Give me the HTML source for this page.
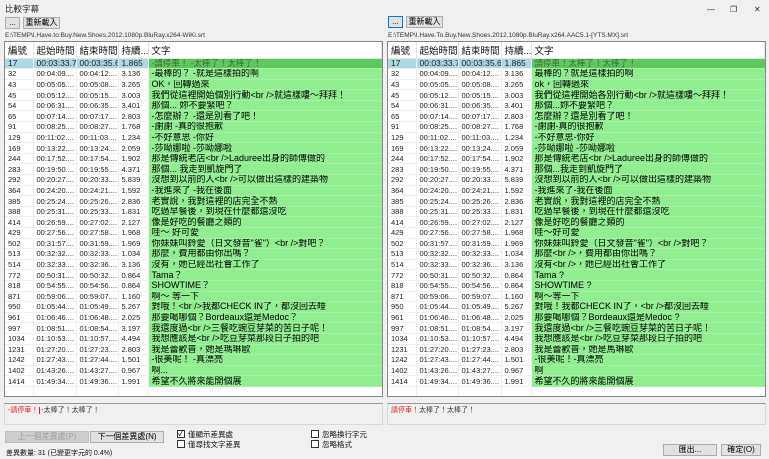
<!DOCTYPE html>
<html><head><meta charset="utf-8"><style>
*{margin:0;padding:0;box-sizing:border-box}
body{width:769px;height:459px;background:#f0f0f0;font-family:"Liberation Sans","Noto Sans CJK TC",sans-serif;position:relative;overflow:hidden;color:#000}
.abs{position:absolute}
.title{left:5px;top:3px;font-size:8.5px;color:#222}
.win{top:5px;font-size:8px;color:#333}
.btn{position:absolute;background:#e1e1e1;border:1px solid #adadad;font-size:8px;text-align:center;line-height:10px;color:#000}
.path{font-size:6.5px;color:#333}
.list{position:absolute;top:41px;height:356px;background:#fff;border:1px solid #828790;overflow:hidden}
table{border-collapse:collapse;table-layout:fixed;width:100%}
th{height:16px;font-weight:normal;font-size:9.5px;text-align:left;padding-left:3px;border-right:1px solid #e5e5e5;border-bottom:1px solid #e5e5e5;white-space:nowrap;overflow:hidden;color:#111}
td{height:10.6px;font-size:7.5px;padding-left:3px;white-space:nowrap;overflow:hidden;border-right:1px solid #f0f0f0;border-bottom:1px solid #f0f0f0;line-height:9px;color:#222}
td.t{background:#90ee90;font-size:9px;border-right:none;border-bottom:1px solid #a8f0a8;color:#000}
tr.s td{background:#add8e6;font-size:8.5px}
tr.s td.t{background:#5ec85e;color:#3a6a3a}
.prev{position:absolute;top:403px;height:22px;border:1px solid #d8d8d8;border-top:1px solid #999;font-size:7px;padding:1px 3px;color:#333}
.red{color:#e02020}
.cb{position:absolute;width:8px;height:8px;border:1px solid #333;background:#fff}
.lbl{position:absolute;font-size:7.5px;color:#111}
</style></head><body>
<div class="abs title">比較字幕</div>
<div class="abs win" style="left:707px">&#8212;</div>
<div class="abs win" style="left:730px">&#10064;</div>
<div class="abs win" style="left:754px">&#10005;</div>

<div class="btn" style="left:5px;top:17px;width:15px;height:12px">...</div>
<div class="btn" style="left:23px;top:17px;width:37px;height:12px">重新載入</div>
<div class="abs path" style="left:5px;top:32px">E:\TEMP\I.Have.to.Buy.New.Shoes.2012.1080p.BluRay.x264-WiKi.srt</div>
<div class="btn" style="left:388px;top:16px;width:15px;height:12px;border-color:#0078d7">...</div>
<div class="btn" style="left:406px;top:16px;width:37px;height:12px">重新載入</div>
<div class="abs path" style="left:388px;top:32px">E:\TEMP\I.Have.To.Buy.New.Shoes.2012.1080p.BluRay.x264.AAC5.1-[YTS.MX].srt</div>

<div class="list" style="left:4px;width:379px">
<table><colgroup><col style="width:28px"><col style="width:43px"><col style="width:42px"><col style="width:30px"><col></colgroup>
<tr><th>編號</th><th>起始時間</th><th>結束時間</th><th>持續...</th><th>文字</th></tr>
<tr class="s"><td>17</td><td>00:03:33.74</td><td>00:03:35.61</td><td>1.865</td><td class="t">-請停車！ -太棒了！太棒了！</td></tr>
<tr><td>32</td><td>00:04:09....</td><td>00:04:12....</td><td>3.136</td><td class="t">-最棒的？ -就是這樣拍的啊</td></tr>
<tr><td>43</td><td>00:05:05....</td><td>00:05:08....</td><td>3.265</td><td class="t">OK，回轉過來</td></tr>
<tr><td>45</td><td>00:05:12....</td><td>00:05:15....</td><td>3.003</td><td class="t">我們從這裡開始個別行動&lt;br /&gt;就這樣嘍～拜拜！</td></tr>
<tr><td>54</td><td>00:06:31....</td><td>00:06:35....</td><td>3.401</td><td class="t">那個... 妳不要緊吧？</td></tr>
<tr><td>65</td><td>00:07:14....</td><td>00:07:17....</td><td>2.803</td><td class="t">-怎麼辦？ -還是別看了吧！</td></tr>
<tr><td>91</td><td>00:08:25....</td><td>00:08:27....</td><td>1.768</td><td class="t">-謝謝 -真的很抱歉</td></tr>
<tr><td>129</td><td>00:11:02....</td><td>00:11:03....</td><td>1.234</td><td class="t">-不好意思 -你好</td></tr>
<tr><td>169</td><td>00:13:22....</td><td>00:13:24....</td><td>2.059</td><td class="t">-莎呦娜啦 -莎呦娜啦</td></tr>
<tr><td>244</td><td>00:17:52....</td><td>00:17:54....</td><td>1.902</td><td class="t">那是傳統老店&lt;br /&gt;Laduree出身的師傅做的</td></tr>
<tr><td>283</td><td>00:19:50....</td><td>00:19:55....</td><td>4.371</td><td class="t">那個... 我走到凱旋門了</td></tr>
<tr><td>292</td><td>00:20:27....</td><td>00:20:33....</td><td>5.839</td><td class="t">沒想到以前的人&lt;br /&gt;可以做出這樣的建築物</td></tr>
<tr><td>364</td><td>00:24:20....</td><td>00:24:21....</td><td>1.592</td><td class="t">-我進來了 -我在後面</td></tr>
<tr><td>385</td><td>00:25:24....</td><td>00:25:26....</td><td>2.836</td><td class="t">老實說，我對這裡的店完全不熟</td></tr>
<tr><td>388</td><td>00:25:31....</td><td>00:25:33....</td><td>1.831</td><td class="t">吃過早餐後，到現在什麼都還沒吃</td></tr>
<tr><td>414</td><td>00:26:59....</td><td>00:27:02....</td><td>2.127</td><td class="t">像是好吃的餐廳之類的</td></tr>
<tr><td>429</td><td>00:27:56....</td><td>00:27:58....</td><td>1.968</td><td class="t">哇～ 好可愛</td></tr>
<tr><td>502</td><td>00:31:57....</td><td>00:31:59....</td><td>1.969</td><td class="t">你妹妹叫鈴愛（日文發音"雀"）&lt;br /&gt;對吧？</td></tr>
<tr><td>513</td><td>00:32:32....</td><td>00:32:33....</td><td>1.034</td><td class="t">那麼，費用都由你出嗎？</td></tr>
<tr><td>514</td><td>00:32:33....</td><td>00:32:36....</td><td>3.136</td><td class="t">沒有，她已經出社會工作了</td></tr>
<tr><td>772</td><td>00:50:31....</td><td>00:50:32....</td><td>0.864</td><td class="t">Tama？</td></tr>
<tr><td>818</td><td>00:54:55....</td><td>00:54:56....</td><td>0.864</td><td class="t">SHOWTIME？</td></tr>
<tr><td>871</td><td>00:59:06....</td><td>00:59:07....</td><td>1.160</td><td class="t">啊～ 等一下</td></tr>
<tr><td>950</td><td>01:05:44....</td><td>01:05:49....</td><td>5.267</td><td class="t">對哦！&lt;br /&gt;我都CHECK IN了，都沒回去睡</td></tr>
<tr><td>961</td><td>01:06:46....</td><td>01:06:48....</td><td>2.025</td><td class="t">那要喝哪個？Bordeaux還是Medoc？</td></tr>
<tr><td>997</td><td>01:08:51....</td><td>01:08:54....</td><td>3.197</td><td class="t">我還度過&lt;br /&gt;三餐吃豌豆芽菜的苦日子呢！</td></tr>
<tr><td>1034</td><td>01:10:53....</td><td>01:10:57....</td><td>4.494</td><td class="t">我想應該是&lt;br /&gt;吃豆芽菜那段日子拍的吧</td></tr>
<tr><td>1231</td><td>01:27:20....</td><td>01:27:23....</td><td>2.803</td><td class="t">我是蕾歡普，她是瑪琳歐</td></tr>
<tr><td>1242</td><td>01:27:43....</td><td>01:27:44....</td><td>1.501</td><td class="t">-很美呢！ -真漂亮</td></tr>
<tr><td>1402</td><td>01:43:26....</td><td>01:43:27....</td><td>0.967</td><td class="t">啊...</td></tr>
<tr><td>1414</td><td>01:49:34....</td><td>01:49:36....</td><td>1.991</td><td class="t">希望不久將來能開個展</td></tr>
<tr><td></td><td></td><td></td><td></td><td style="border-right:none"></td></tr>
</table></div>

<div class="list" style="left:387px;width:379px">
<table><colgroup><col style="width:28px"><col style="width:42px"><col style="width:43px"><col style="width:30px"><col></colgroup>
<tr><th>編號</th><th>起始時間</th><th>結束時間</th><th>持續...</th><th>文字</th></tr>
<tr class="s"><td>17</td><td>00:03:33.74</td><td>00:03:35.61</td><td>1.865</td><td class="t">請停車！太棒了！太棒了！</td></tr>
<tr><td>32</td><td>00:04:09....</td><td>00:04:12....</td><td>3.136</td><td class="t">最棒的？就是這樣拍的啊</td></tr>
<tr><td>43</td><td>00:05:05....</td><td>00:05:08....</td><td>3.265</td><td class="t">ok，回轉過來</td></tr>
<tr><td>45</td><td>00:05:12....</td><td>00:05:15....</td><td>3.003</td><td class="t">我們從這裡開始各別行動&lt;br /&gt;就這樣嘍～拜拜！</td></tr>
<tr><td>54</td><td>00:06:31....</td><td>00:06:35....</td><td>3.401</td><td class="t">那個...妳不要緊吧？</td></tr>
<tr><td>65</td><td>00:07:14....</td><td>00:07:17....</td><td>2.803</td><td class="t">怎麼辦？還是別看了吧！</td></tr>
<tr><td>91</td><td>00:08:25....</td><td>00:08:27....</td><td>1.768</td><td class="t">-謝謝-真的很抱歉</td></tr>
<tr><td>129</td><td>00:11:02....</td><td>00:11:03....</td><td>1.234</td><td class="t">-不好意思-你好</td></tr>
<tr><td>169</td><td>00:13:22....</td><td>00:13:24....</td><td>2.059</td><td class="t">-莎呦娜啦 -莎呦娜啦</td></tr>
<tr><td>244</td><td>00:17:52....</td><td>00:17:54....</td><td>1.902</td><td class="t">那是傳統老店&lt;br /&gt;Laduree出身的師傅做的</td></tr>
<tr><td>283</td><td>00:19:50....</td><td>00:19:55....</td><td>4.371</td><td class="t">那個...我走到凱旋門了</td></tr>
<tr><td>292</td><td>00:20:27....</td><td>00:20:33....</td><td>5.839</td><td class="t">沒想到以前的人&lt;br /&gt;可以做出這樣的建築物</td></tr>
<tr><td>364</td><td>00:24:20....</td><td>00:24:21....</td><td>1.592</td><td class="t">-我進來了-我在後面</td></tr>
<tr><td>385</td><td>00:25:24....</td><td>00:25:26....</td><td>2.836</td><td class="t">老實說，我對這裡的店完全不熟</td></tr>
<tr><td>388</td><td>00:25:31....</td><td>00:25:33....</td><td>1.831</td><td class="t">吃過早餐後，到現在什麼都還沒吃</td></tr>
<tr><td>414</td><td>00:26:59....</td><td>00:27:02....</td><td>2.127</td><td class="t">像是好吃的餐廳之類的</td></tr>
<tr><td>429</td><td>00:27:56....</td><td>00:27:58....</td><td>1.968</td><td class="t">哇～好可愛</td></tr>
<tr><td>502</td><td>00:31:57....</td><td>00:31:59....</td><td>1.969</td><td class="t">你妹妹叫鈴愛（日文發音"雀"）&lt;br /&gt;對吧？</td></tr>
<tr><td>513</td><td>00:32:32....</td><td>00:32:33....</td><td>1.034</td><td class="t">那麼&lt;br /&gt;，費用都由你出嗎？</td></tr>
<tr><td>514</td><td>00:32:33....</td><td>00:32:36....</td><td>3.136</td><td class="t">沒有&lt;br /&gt;，她已經出社會工作了</td></tr>
<tr><td>772</td><td>00:50:31....</td><td>00:50:32....</td><td>0.864</td><td class="t">Tama ?</td></tr>
<tr><td>818</td><td>00:54:55....</td><td>00:54:56....</td><td>0.864</td><td class="t">SHOWTIME ?</td></tr>
<tr><td>871</td><td>00:59:06....</td><td>00:59:07....</td><td>1.160</td><td class="t">啊～等一下</td></tr>
<tr><td>950</td><td>01:05:44....</td><td>01:05:49....</td><td>5.267</td><td class="t">對哦！我都CHECK IN了，&lt;br /&gt;都沒回去睡</td></tr>
<tr><td>961</td><td>01:06:46....</td><td>01:06:48....</td><td>2.025</td><td class="t">那要喝哪個？Bordeaux還是Medoc ?</td></tr>
<tr><td>997</td><td>01:08:51....</td><td>01:08:54....</td><td>3.197</td><td class="t">我還度過&lt;br /&gt;三餐吃豌豆芽菜的苦日子呢！</td></tr>
<tr><td>1034</td><td>01:10:53....</td><td>01:10:57....</td><td>4.494</td><td class="t">我想應該是&lt;br /&gt;吃豆芽菜那段日子拍的吧</td></tr>
<tr><td>1231</td><td>01:27:20....</td><td>01:27:23....</td><td>2.803</td><td class="t">我是蕾歡普，她是馬琳歐</td></tr>
<tr><td>1242</td><td>01:27:43....</td><td>01:27:44....</td><td>1.501</td><td class="t">-很美呢！-真漂亮</td></tr>
<tr><td>1402</td><td>01:43:26....</td><td>01:43:27....</td><td>0.967</td><td class="t">啊</td></tr>
<tr><td>1414</td><td>01:49:34....</td><td>01:49:36....</td><td>1.991</td><td class="t">希望不久的將來能開個展</td></tr>
<tr><td></td><td></td><td></td><td></td><td style="border-right:none"></td></tr>
</table></div>

<div class="prev" style="left:4px;width:379px"><span class="red">-請停車！</span><span style="border-left:1px solid #e02020;margin-left:1px;padding-left:1px">-太棒了！太棒了！</span></div>
<div class="prev" style="left:387px;width:379px"><span class="red">請停車！</span>太棒了！太棒了！</div>

<div class="btn" style="left:5px;top:431px;width:84px;height:12px;color:#a0a0a0;background:#cccccc;border-color:#bfbfbf">上一個差異處(P)</div>
<div class="btn" style="left:90px;top:431px;width:74px;height:12px">下一個差異處(N)</div>
<div class="cb" style="left:177px;top:430px"></div><div class="abs" style="left:178px;top:428px;font-size:8px">&#10003;</div>
<div class="lbl" style="left:188px;top:429px">僅顯示差異處</div>
<div class="cb" style="left:177px;top:440px"></div>
<div class="lbl" style="left:188px;top:439px">僅尋找文字差異</div>
<div class="cb" style="left:311px;top:430px"></div>
<div class="lbl" style="left:322px;top:429px">忽略換行字元</div>
<div class="cb" style="left:311px;top:440px"></div>
<div class="lbl" style="left:322px;top:439px">忽略格式</div>
<div class="lbl" style="left:6px;top:448px;font-size:7px">差異數量: 31 (已變更字元的 0.4%)</div>
<div class="btn" style="left:663px;top:444px;width:54px;height:12px">匯出...</div>
<div class="btn" style="left:721px;top:444px;width:40px;height:12px">確定(O)</div>
</body></html>
